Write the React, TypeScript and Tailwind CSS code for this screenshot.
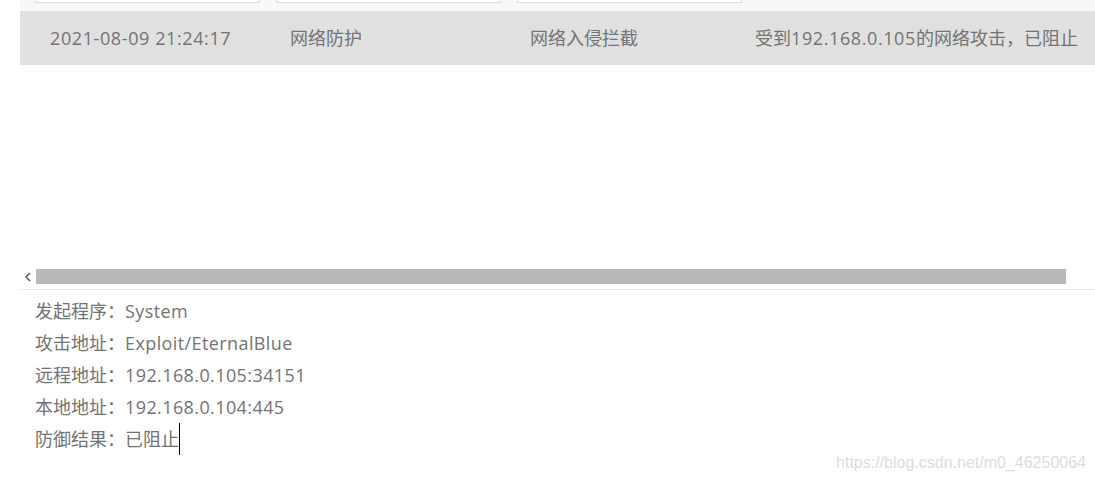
import React from "react";

const details = [
  ["发起程序", "System"],
  ["攻击地址", "Exploit/EternalBlue"],
  ["远程地址", "192.168.0.105:34151"],
  ["本地地址", "192.168.0.104:445"],
];

export default function App() {
  return (
    <div
      className="relative w-[1095px] h-[481px] bg-white overflow-hidden text-[#737373]"
      style={{ fontFamily: '"Open Sans", "Noto Sans CJK SC", sans-serif' }}
    >
      {/* filter strip */}
      <div className="ml-5 h-[11px] bg-[#f7f8f8] flex gap-4 pl-[15px]">
        <div className="w-[225px] h-[3px] bg-white border border-t-0 border-[#dcdcdc]" />
        <div className="w-[225px] h-[3px] bg-white border border-t-0 border-[#dcdcdc]" />
        <div className="w-[225px] h-[3px] bg-white border border-t-0 border-[#dcdcdc]" />
      </div>

      {/* table row */}
      <div className="ml-5 h-[54px] bg-[#e0e0e0] flex items-center text-[18px] whitespace-nowrap pl-[30px]">
        <div className="w-[240px] tracking-[0.6px]">2021-08-09 21:24:17</div>
        <div className="w-[240px]">网络防护</div>
        <div className="w-[225px]">网络入侵拦截</div>
        <div>
          受到<span className="tracking-[0.6px]">192.168.0.105</span>的网络攻击，已阻止
        </div>
      </div>

      <div className="h-[204px]" />

      {/* horizontal scrollbar */}
      <div className="flex items-center h-[15px] ml-[24px]">
        <svg width="8" height="10" viewBox="0 0 8 10" className="mr-[4px]">
          <path d="M6 1 L2 5 L6 9" fill="none" stroke="#555" strokeWidth="1.4" />
        </svg>
        <div className="w-[1030px] h-[15px] bg-[#b8b8b8]" />
      </div>

      <div className="ml-5 mt-[5px] border-t border-[#e8e8e8]" />

      {/* details */}
      <div className="pl-[35px] pt-[5px] text-[18px] leading-[32px]">
        {details.map(([k, v]) => (
          <div key={k}>
            {k}：<span className="tracking-[0.4px]">{v}</span>
          </div>
        ))}
        <div className="flex items-center">
          防御结果：已阻止
          <span className="inline-block w-px h-[32px] bg-black" />
        </div>
      </div>

      <div
        className="absolute right-[9px] top-[451px] text-[16px] text-[#dcdcdc]"
        style={{ fontFamily: '"Liberation Sans", Arial, sans-serif' }}
      >
        https://blog.csdn.net/m0_46250064
      </div>
    </div>
  );
}
